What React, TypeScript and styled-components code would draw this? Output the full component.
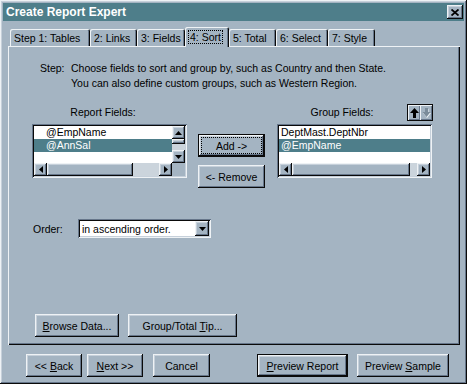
import React from 'react';
import styled, { createGlobalStyle, css } from 'styled-components';

const face = '#a4b4c2';
const light = '#c6d0da';
const hilite = '#eef2f5';
const shadow = '#66768a';
const dark = '#0a0a0a';
const teal = '#4e7e8a';
const track = '#cbd4dc';

const raised = css`
  box-shadow: inset -1px -1px ${dark}, inset 1px 1px ${hilite}, inset -2px -2px ${shadow}, inset 2px 2px ${light};
`;

const sunken = css`
  box-shadow: inset 1px 1px ${shadow}, inset -1px -1px ${hilite}, inset 2px 2px ${dark}, inset -2px -2px ${light};
`;

const GlobalStyle = createGlobalStyle`
  html, body {
    margin: 0;
    padding: 0;
    background: ${face};
  }
  body {
    font-family: "Liberation Sans", Arial, sans-serif;
    font-size: 10.5px;
    color: #000;
  }
`;

const Window = styled.div`
  width: 467px;
  height: 384px;
  box-sizing: border-box;
  padding: 3px;
  background: ${face};
  display: flex;
  flex-direction: column;
  ${raised}
`;

const TitleBar = styled.div`
  height: 18px;
  background: ${teal};
  display: flex;
  align-items: center;
  justify-content: space-between;
  padding: 0 1px 0 3px;
  color: #fff;
  font-weight: bold;
  font-size: 12px;
`;

const CloseBtn = styled.div`
  width: 16px;
  height: 14px;
  background: ${face};
  display: flex;
  align-items: center;
  justify-content: center;
  ${raised}
`;

const Body = styled.div`
  padding: 6px 4px 0 5px;
  display: flex;
  flex-direction: column;
`;

const TabStrip = styled.div`
  display: flex;
  align-items: flex-end;
  height: 19px;
  padding-left: 2px;
`;

const Tab = styled.div<{ $active?: boolean; $w: number }>`
  width: ${p => p.$w}px;
  height: ${p => (p.$active ? 20 : 17)}px;
  margin-bottom: ${p => (p.$active ? -1 : 0)}px;
  position: relative;
  z-index: ${p => (p.$active ? 2 : 1)};
  padding: 0 0 0 4px;
  display: flex;
  align-items: center;
  box-sizing: border-box;
  background: ${face};
  border-radius: 2px 2px 0 0;
  box-shadow: inset 1px 1px ${hilite}, inset -1px 0 ${dark}, inset -2px 0 ${shadow};
  white-space: nowrap;
`;

const FocusText = styled.span`
  outline: 1px dotted #000;
  outline-offset: 0;
  padding: 0 1px;
`;

const Panel = styled.div`
  height: 299px;
  box-sizing: border-box;
  padding: 15px 0 0 24px;
  background: ${face};
  box-shadow: inset 1px 1px ${hilite}, inset -1px -1px ${dark}, inset -2px -2px ${shadow};
  display: flex;
  flex-direction: column;
`;

const StepBlock = styled.div`
  display: flex;
  margin-left: 8px;
  line-height: 15px;
`;

const StepLabel = styled.div`
  width: 31px;
`;

const FieldsRow = styled.div`
  display: flex;
  margin-top: 12px;
  align-items: flex-start;
`;

const Column = styled.div<{ $gap: number }>`
  width: 155px;
  margin-left: ${p => p.$gap}px;
  display: flex;
  flex-direction: column;
`;

const ColHeader = styled.div`
  height: 21px;
  display: flex;
  align-items: flex-start;
`;

const ColLabel = styled.div<{ $pr?: number }>`
  flex: 1;
  text-align: center;
  line-height: 18px;
  padding-right: ${p => p.$pr ?? 0}px;
`;

const ListBox = styled.div<{ $vscroll?: boolean }>`
  width: 155px;
  height: 54px;
  box-sizing: border-box;
  padding: 2px;
  background: #fff;
  display: grid;
  grid-template-columns: ${p => (p.$vscroll ? '1fr 13px' : '1fr')};
  grid-template-rows: 1fr 13px;
  ${sunken}
`;

const Items = styled.div`
  overflow: hidden;
`;

const Item = styled.div<{ $selected?: boolean; $indent: number }>`
  height: 13px;
  line-height: 13px;
  padding-left: ${p => p.$indent}px;
  white-space: nowrap;
  background: ${p => (p.$selected ? teal : 'transparent')};
  color: ${p => (p.$selected ? '#fff' : '#000')};
`;

const VScroll = styled.div`
  display: flex;
  flex-direction: column;
  background: ${track};
`;

const HScroll = styled.div`
  display: flex;
  background: ${track};
`;

const ArrowBtn = styled.div`
  width: 13px;
  height: 13px;
  flex: none;
  background: ${face};
  display: flex;
  align-items: center;
  justify-content: center;
  ${raised}
`;

const Thumb = styled.div<{ $size: number; $vertical?: boolean }>`
  flex: none;
  background: ${face};
  ${p => (p.$vertical ? `height: ${p.$size}px;` : `width: ${p.$size}px;`)}
  ${raised}
`;

const TrackFill = styled.div`
  flex: 1;
`;

const Corner = styled.div`
  background: ${face};
`;

const MidCol = styled.div`
  width: 67px;
  margin-left: 11px;
  padding-top: 31px;
  display: flex;
  flex-direction: column;
  gap: 8px;
`;

const Button = styled.div<{ $w: number; $default?: boolean; $focus?: boolean }>`
  width: ${p => p.$w}px;
  height: 23px;
  flex: none;
  box-sizing: border-box;
  background: ${face};
  display: flex;
  align-items: center;
  justify-content: center;
  white-space: nowrap;
  ${p =>
    p.$default
      ? css`
          box-shadow: inset 0 0 0 1px ${dark}, inset -2px -2px ${dark}, inset 2px 2px ${hilite},
            inset -3px -3px ${shadow}, inset 3px 3px ${light};
        `
      : raised}
  ${p =>
    p.$focus &&
    css`
      outline: 1px dotted #000;
      outline-offset: -4px;
    `}
`;

const ArrowPair = styled.div`
  display: flex;
  margin-top: 1px;
  margin-right: -1px;
  border: 1px solid ${dark};
`;

const SmallBtn = styled.div`
  width: 12px;
  height: 15px;
  background: ${face};
  display: flex;
  align-items: center;
  justify-content: center;
  box-shadow: inset 1px 1px ${hilite}, inset -1px -1px ${shadow};
`;

const OrderRow = styled.div`
  display: flex;
  align-items: center;
  margin-top: 31px;
  height: 19px;
`;

const OrderLabel = styled.div`
  width: 45px;
  margin-left: 1px;
`;

const Select = styled.div`
  width: 133px;
  height: 19px;
  box-sizing: border-box;
  padding: 2px;
  background: #fff;
  display: flex;
  align-items: center;
  ${sunken}
`;

const SelectText = styled.div`
  flex: 1;
  padding-left: 2px;
  white-space: nowrap;
`;

const DropBtn = styled(ArrowBtn)`
  width: 14px;
  height: 15px;
`;

const PanelButtons = styled.div`
  display: flex;
  gap: 9px;
  margin-top: 76px;
  margin-left: 3px;
`;

const BottomRow = styled.div`
  display: flex;
  margin-top: 9px;
  padding: 0 11px 0 18px;
`;

const Spacer = styled.div<{ $w?: number }>`
  ${p => (p.$w ? `width: ${p.$w}px;` : 'flex: 1;')}
`;

const Tri = ({ dir }: { dir: 'up' | 'down' | 'left' | 'right' }) => {
  const pts = {
    up: '3.5,0 7,4 0,4',
    down: '0,0 7,0 3.5,4',
    left: '4,0 4,7 0,3.5',
    right: '0,0 4,3.5 0,7',
  }[dir];
  const vertical = dir === 'up' || dir === 'down';
  return (
    <svg width={vertical ? 7 : 4} height={vertical ? 4 : 7} viewBox={vertical ? '0 0 7 4' : '0 0 4 7'}>
      <polygon points={pts} fill="#000" />
    </svg>
  );
};

const BlockArrow = ({ down }: { down?: boolean }) => (
  <svg width="9" height="10" viewBox="0 0 9 10">
    {down ? (
      <>
        <polygon points="3.5,1 6.5,1 6.5,5 9,5 5,10 1,5 3.5,5" fill={hilite} />
        <polygon points="3,0 6,0 6,4 8.5,4 4.5,9 0.5,4 3,4" fill="#7b8c9a" />
      </>
    ) : (
      <polygon points="4.5,0 9,5 6,5 6,10 3,10 3,5 0,5" fill="#000" />
    )}
  </svg>
);

const HBar = ({ thumb }: { thumb: number }) => (
  <HScroll>
    <ArrowBtn><Tri dir="left" /></ArrowBtn>
    <Thumb $size={thumb} />
    <TrackFill />
    <ArrowBtn><Tri dir="right" /></ArrowBtn>
  </HScroll>
);

const tabs: [string, number][] = [
  ['Step 1: Tables', 80],
  ['2: Links', 47],
  ['3: Fields', 48],
  ['4: Sort', 44],
  ['5: Total', 47],
  ['6: Select', 52],
  ['7: Style', 47],
];

export default function App() {
  return (
    <>
      <GlobalStyle />
      <Window>
        <TitleBar>
          <span>Create Report Expert</span>
          <CloseBtn>
            <svg width="8" height="7" viewBox="0 0 8 7">
              <path d="M0.5 0.5 L7.5 6.5 M7.5 0.5 L0.5 6.5" stroke="#000" strokeWidth="1.8" />
            </svg>
          </CloseBtn>
        </TitleBar>
        <Body>
          <TabStrip>
            {tabs.map(([t, w]) => (
              <Tab key={t} $w={w} $active={t === '4: Sort'}>
                {t === '4: Sort' ? <FocusText>{t}</FocusText> : t}
              </Tab>
            ))}
          </TabStrip>
          <Panel>
            <StepBlock>
              <StepLabel>Step:</StepLabel>
              <div>
                <div>Choose fields to sort and group by, such as Country and then State.</div>
                <div>You can also define custom groups, such as Western Region.</div>
              </div>
            </StepBlock>

            <FieldsRow>
              <Column $gap={0}>
                <ColHeader>
                  <ColLabel $pr={13}>Report Fields:</ColLabel>
                </ColHeader>
                <ListBox $vscroll>
                  <Items>
                    <Item $indent={12}>@EmpName</Item>
                    <Item $indent={12} $selected>@AnnSal</Item>
                  </Items>
                  <VScroll>
                    <ArrowBtn><Tri dir="up" /></ArrowBtn>
                    <Thumb $vertical $size={5} />
                    <TrackFill />
                    <ArrowBtn><Tri dir="down" /></ArrowBtn>
                  </VScroll>
                  <HBar thumb={86} />
                  <Corner />
                </ListBox>
              </Column>

              <MidCol>
                <Button $w={67} $default $focus>Add -&gt;</Button>
                <Button $w={67}>&lt;- Remove</Button>
              </MidCol>

              <Column $gap={12}>
                <ColHeader>
                  <ColLabel>Group Fields:</ColLabel>
                  <ArrowPair>
                    <SmallBtn><BlockArrow /></SmallBtn>
                    <SmallBtn><BlockArrow down /></SmallBtn>
                  </ArrowPair>
                </ColHeader>
                <ListBox>
                  <Items>
                    <Item $indent={2}>DeptMast.DeptNbr</Item>
                    <Item $indent={2} $selected>@EmpName</Item>
                  </Items>
                  <HBar thumb={118} />
                </ListBox>
              </Column>
            </FieldsRow>

            <OrderRow>
              <OrderLabel>Order:</OrderLabel>
              <Select>
                <SelectText>in ascending order.</SelectText>
                <DropBtn><Tri dir="down" /></DropBtn>
              </Select>
            </OrderRow>

            <PanelButtons>
              <Button $w={84}><span><u>B</u>rowse Data...</span></Button>
              <Button $w={109}><span>Group/Total <u>T</u>ip...</span></Button>
            </PanelButtons>
          </Panel>

          <BottomRow>
            <Button $w={56}><span>&lt;&lt; <u>B</u>ack</span></Button>
            <Spacer $w={5} />
            <Button $w={56}><span><u>N</u>ext &gt;&gt;</span></Button>
            <Spacer $w={10} />
            <Button $w={57}>Cancel</Button>
            <Spacer />
            <Button $w={91} $default><span><u>P</u>review Report</span></Button>
            <Spacer $w={9} />
            <Button $w={92}><span>Preview <u>S</u>ample</span></Button>
          </BottomRow>
        </Body>
      </Window>
    </>
  );
}
